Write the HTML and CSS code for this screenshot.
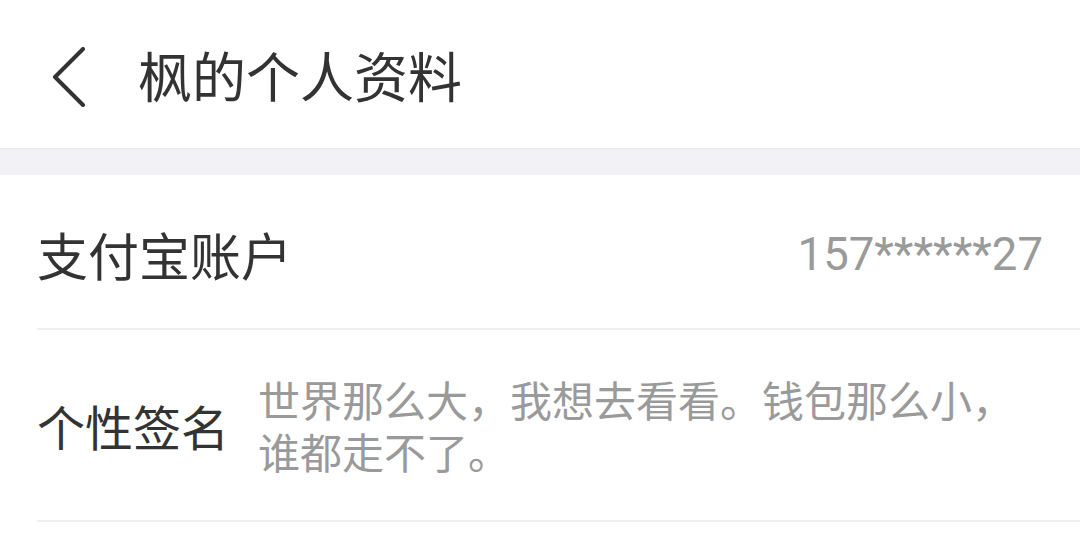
FILE: index.html
```html
<!DOCTYPE html>
<html lang="zh-CN">
<head>
    <meta charset="UTF-8">
    <meta name="viewport" content="width=device-width, initial-scale=1.0">
    <title>枫的个人资料</title>
    <link rel="stylesheet" href="styles.css">
</head>
<body>
    <header class="topbar">
        <span class="back">
            <svg width="40" height="60" viewBox="0 0 40 60">
                <polyline points="33,2 5,30 33,58" fill="none" stroke="#333" stroke-width="4" stroke-linecap="round" stroke-linejoin="round"/>
            </svg>
        </span>
        <h1>枫的个人资料</h1>
    </header>
    <div class="gap"></div>
    <section class="list">
        <div class="row">
            <span class="label big">支付宝账户</span>
            <span class="value num">157******27</span>
        </div>
        <div class="row sign">
            <span class="label">个性签名</span>
            <p class="value">世界那么大，我想去看看。钱包那么小，谁都走不了。</p>
        </div>
    </section>
</body>
</html>
```

FILE: styles.css
```css
body {
    margin: 0;
    padding: 0;
    background: #fff;
    font-family: "Noto Sans CJK SC", "Noto Sans", sans-serif;
    color: #333;
}

.topbar {
    height: 149px;
    display: flex;
    align-items: center;
    padding-left: 50px;
    box-sizing: border-box;
    border-bottom: 1px solid #e9e9ed;
}

.back {
    display: flex;
    width: 88px;
    margin-top: 6px;
}

.topbar h1 {
    margin: 0;
    font-size: 54px;
    font-weight: 400;
    color: #333;
}

.gap {
    height: 26px;
    background: #f2f2f6;
}

.list {
    padding-left: 37px;
}

.row {
    display: flex;
    align-items: center;
    justify-content: space-between;
    border-bottom: 2px solid #efefef;
    padding-right: 37px;
}

.row:first-child {
    height: 155px;
    box-sizing: border-box;
}

.label {
    font-size: 48px;
    color: #333;
    flex-shrink: 0;
    white-space: nowrap;
}

.label.big {
    font-size: 51px;
    margin-top: 4px;
}

.value {
    color: #9a9a9a;
}

.num {
    font-family: Roboto, "Noto Sans", sans-serif;
    font-size: 45.5px;
    margin-top: 6px;
}

.sign {
    height: 192px;
    box-sizing: border-box;
    justify-content: flex-start;
}

.sign .value {
    margin: 0 0 0 29px;
    font-size: 42px;
    line-height: 52px;
    max-width: 780px;
}
```
